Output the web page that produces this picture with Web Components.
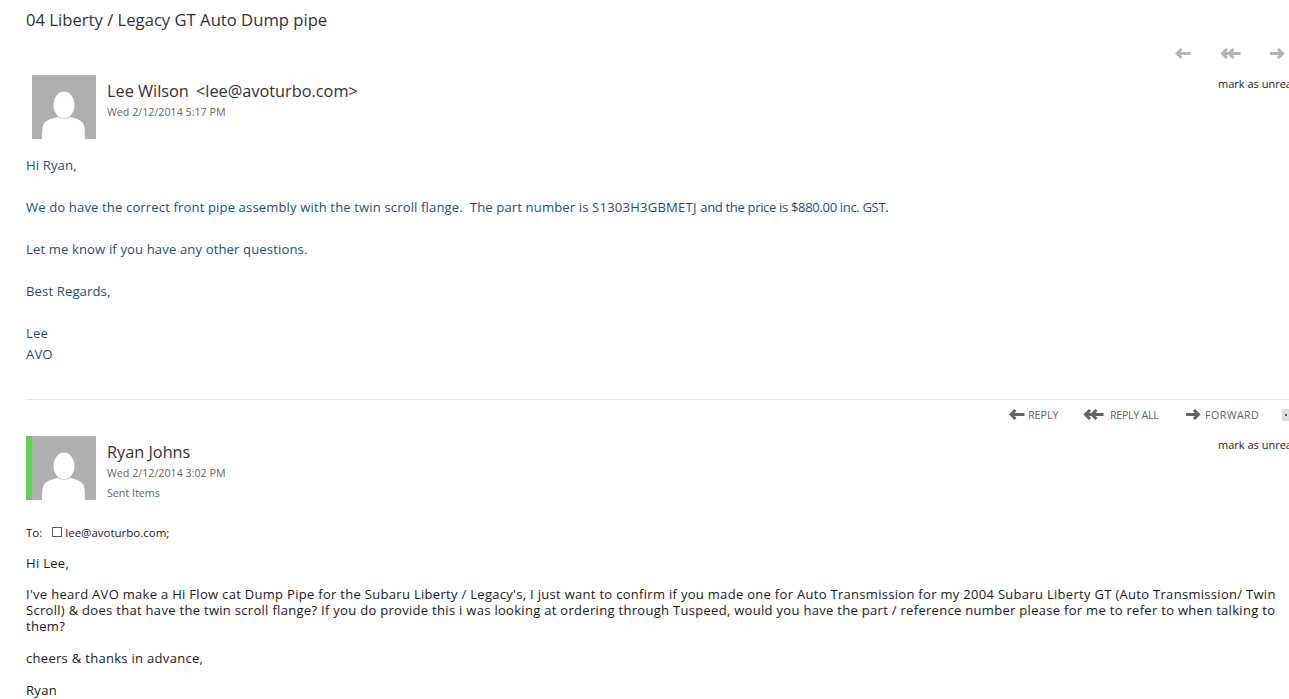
<!DOCTYPE html>
<html>
<head>
<meta charset="utf-8">
<title>04 Liberty / Legacy GT Auto Dump pipe</title>
<style>
  html, body { margin: 0; padding: 0; background: #fff; overflow: hidden; }
  body { width: 1289px; height: 699px; font-family: "Open Sans", "Noto Sans", sans-serif; }
</style>
</head>
<body>
<template id="arrow-tpl">
  <style>
    :host { display: inline-flex; }
    svg { display: block; fill: none; stroke: currentColor; stroke-width: 3; }
  </style>
  <svg></svg>
</template>

<mail-view>
  <mail-subject>04 Liberty / Legacy GT Auto Dump pipe</mail-subject>
  <mail-nav></mail-nav>

  <mail-message name="Lee Wilson" address="&lt;lee@avoturbo.com&gt;" date="Wed 2/12/2014 5:17 PM" style="--after-head:16px;height:324px">
    <mail-para tone="blue" gap="21">Hi Ryan,</mail-para>
    <mail-para tone="blue" gap="21">We do have the correct front pipe assembly with the twin scroll flange.&nbsp; The part number is <span style="letter-spacing:.2px">S1303H3GBMETJ</span> <span style="letter-spacing:-.36px">and the price is $880.00 inc. GST.</span></mail-para>
    <mail-para tone="blue" gap="21">Let me know if you have any other questions.</mail-para>
    <mail-para tone="blue" gap="21">Best Regards,</mail-para>
    <mail-para tone="blue">Lee<br>AVO</mail-para>
  </mail-message>

  <mail-actions></mail-actions>

  <mail-message name="Ryan Johns" date="Wed 2/12/2014 3:02 PM" folder="Sent Items" sent style="--after-head:24px">
    <mail-recipients slot="recipients">lee@avoturbo.com;</mail-recipients>
    <mail-para tone="black" gap="15">Hi Lee,</mail-para>
    <mail-para tone="black" gap="16">I've heard AVO make a Hi Flow cat Dump Pipe for the Subaru Liberty / Legacy's, I just want to confirm if you made one for Auto Transmission for my 2004 Subaru Liberty GT (Auto Transmission/ Twin Scroll) &amp; does that have the twin scroll flange? If you do provide this i was looking at ordering through Tuspeed, would you have the part / reference number please for me to refer to when talking to them?</mail-para>
    <mail-para tone="black" gap="16">cheers &amp; thanks in advance,</mail-para>
    <mail-para tone="black">Ryan</mail-para>
  </mail-message>
</mail-view>

<script>
const ARROWS = {
  back: { w: 16, d: 'M15.500 7.500H2M6.500 3 2 7.500 6.500 12' },
  all: { w: 21, d: 'M20.500 7.500H3M7 3 2.500 7.500 7 12M13.500 3 9 7.500 13.500 12' },
  forward: { w: 16, d: 'M0 7.500H12.500M8 3 12.500 7.500 8 12' }
};

class MailArrow extends HTMLElement {
  connectedCallback() {
    const root = this.attachShadow({ mode: 'open' });
    root.appendChild(document.getElementById('arrow-tpl').content.cloneNode(true));
    const a = ARROWS[this.getAttribute('kind')];
    const svg = root.querySelector('svg');
    svg.setAttribute('width', a.w);
    svg.setAttribute('height', 15);
    svg.setAttribute('viewBox', `0 0 ${a.w} 15`);
    svg.innerHTML = `<path d="${a.d}"/>`;
  }
}
customElements.define('mail-arrow', MailArrow);

class MailView extends HTMLElement {
  constructor() {
    super();
    this.attachShadow({ mode: 'open' });
    this.shadowRoot.innerHTML = `
      <style>
        :host { display: block; width: 1289px; height: 699px; overflow: hidden; }
      </style>
      <slot></slot>`;
  }
}
customElements.define('mail-view', MailView);

class MailSubject extends HTMLElement {
  constructor() {
    super();
    this.attachShadow({ mode: 'open' });
    this.shadowRoot.innerHTML = `
      <style>
        :host { display: block; padding: 8px 0 0 26px; height: 24px; font-size: 16.650px; line-height: 24px; color: #333; }
      </style>
      <slot></slot>`;
  }
}
customElements.define('mail-subject', MailSubject);

class MailNav extends HTMLElement {
  constructor() {
    super();
    this.attachShadow({ mode: 'open' });
    this.shadowRoot.innerHTML = `
      <style>
        :host { display: flex; height: 43px; padding: 14px 0 0 1175px; box-sizing: border-box; color: #b4b4b4; gap: 29px; }
      </style>
      <mail-arrow kind="back"></mail-arrow>
      <mail-arrow kind="all"></mail-arrow>
      <mail-arrow kind="forward"></mail-arrow>`;
  }
}
customElements.define('mail-nav', MailNav);

class MailMessage extends HTMLElement {
  constructor() {
    super();
    this.attachShadow({ mode: 'open' });
  }
  connectedCallback() {
    const folder = this.getAttribute('folder');
    const address = this.getAttribute('address');
    this.shadowRoot.innerHTML = `
      <style>
        :host { display: block; padding-left: 26px; box-sizing: border-box; }
        .head { display: grid; grid-template-columns: 70px 1100px max-content; column-gap: 11px; height: 64px; }
        .pic { display: block; width: 64px; height: 64px; border-left: 6px solid ${this.hasAttribute('sent') ? '#5ed04f' : 'transparent'}; }
        .who { padding-top: 5px; }
        .name { font-size: 16.300px; line-height: 22px; color: #333; white-space: nowrap; }
        .name span { margin-left: 3px; }
        .meta { font-size: 10.700px; line-height: 15px; color: #666; margin-top: 3px; }
        .folder { margin-top: 5px; }
        .mark { font-size: 11px; line-height: 16px; color: #222; padding-top: 1px; }
        .after { height: var(--after-head, 15px); }
        .body { padding-right: 8px; }
      </style>
      <div class="head">
        <svg class="pic" viewBox="0 0 64 64">
          <rect width="64" height="64" fill="#afafaf"/>
          <ellipse cx="32" cy="30" rx="10.500" ry="13.500" fill="#fff"/>
          <path d="M10 64C10 55 10.500 49 13 47 17 44 22 43 26 42 29 44.500 35 44.500 38 42 42 43 47 44 50 47 52.500 49 53 55 53 64Z" fill="#fff"/>
        </svg>
        <div class="who">
          <div class="name">${this.getAttribute('name')}${address ? ' <span>' + address.replace('<', '&lt;') + '</span>' : ''}</div>
          <div class="meta">${this.getAttribute('date')}</div>
          ${folder ? `<div class="meta folder">${folder}</div>` : ''}
        </div>
        <div class="mark">mark as unread</div>
      </div>
      <div class="after"></div>
      <slot name="recipients"></slot>
      <div class="body"><slot></slot></div>`;
  }
}
customElements.define('mail-message', MailMessage);

class MailPara extends HTMLElement {
  constructor() {
    super();
    this.attachShadow({ mode: 'open' });
  }
  connectedCallback() {
    const blue = this.getAttribute('tone') === 'blue';
    this.shadowRoot.innerHTML = `
      <style>
        :host { display: block; font-size: ${blue ? '13.100px' : '13px'}; letter-spacing: ${blue ? 0.12 : 0.3}px; line-height: ${blue ? 21 : 16}px; color: ${blue ? '#1f4e79' : '#1a1a1a'}; margin-bottom: ${this.getAttribute('gap') || 0}px; }
      </style>
      <slot></slot>`;
  }
}
customElements.define('mail-para', MailPara);

class MailRecipients extends HTMLElement {
  constructor() {
    super();
    this.attachShadow({ mode: 'open' });
    this.shadowRoot.innerHTML = `
      <style>
        :host { display: flex; align-items: center; height: 16px; margin-bottom: 15px; font-size: 11.500px; color: #222; }
        .box { width: 8px; height: 8px; border: 1px solid #555; margin: 0 3px 0 10px; }
      </style>
      <span>To:</span><span class="box"></span><slot></slot>`;
  }
}
customElements.define('mail-recipients', MailRecipients);

class MailActions extends HTMLElement {
  constructor() {
    super();
    this.attachShadow({ mode: 'open' });
    this.shadowRoot.innerHTML = `
      <style>
        :host { display: block; margin-left: 26px; border-top: 1px solid #e6e6e6; height: 37px; box-sizing: border-box; font-size: 10.700px; color: #666; }
        .row { display: flex; align-items: center; height: 29px; padding-left: 983px; white-space: nowrap; color: #5f6468; }
        .item { display: flex; align-items: center; gap: 3px; }
        .reply { width: 74px; }
        .all { width: 103px; gap: 6px; letter-spacing: -.3px; }
        .fwd { width: 96px; letter-spacing: .4px; }
        .more { width: 7px; height: 12px; background: #dcdcdc; position: relative; flex: none; }
        .more::after { content: ""; position: absolute; left: 3px; top: 5px; width: 2px; height: 2px; background: #555; }
      </style>
      <div class="row">
        <div class="item reply"><mail-arrow kind="back"></mail-arrow>REPLY</div>
        <div class="item all"><mail-arrow kind="all"></mail-arrow>REPLY ALL</div>
        <div class="item fwd"><mail-arrow kind="forward"></mail-arrow>FORWARD</div>
        <div class="more"></div>
      </div>`;
  }
}
customElements.define('mail-actions', MailActions);
</script>
</body>
</html>
